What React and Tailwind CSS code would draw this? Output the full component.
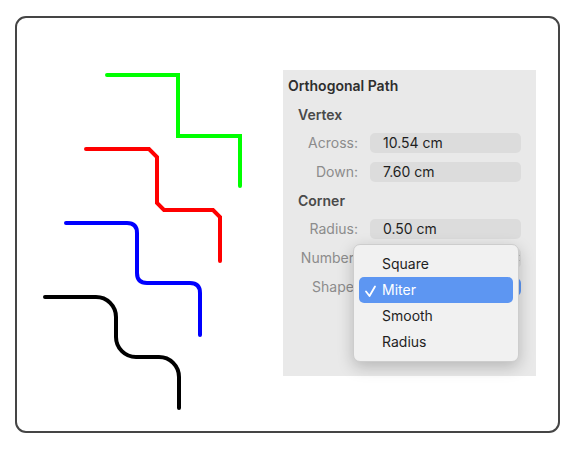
import React from "react";

const font = { fontFamily: "Inter, 'Noto Sans', sans-serif" };

function Field({ label, value, children }) {
  return (
    <div className="flex items-center h-[20px]">
      <div className="w-[75px] text-right text-[14px] leading-[16px] text-[#8c8c8c]">{label}</div>
      <div className="ml-[12px] w-[151px] h-[20px] rounded-[5px] bg-[#dcdcdc] pl-[13px] flex items-center text-[14px] leading-[16px] text-[#1f1f1f] relative">
        {value}
        {children}
      </div>
    </div>
  );
}

export default function App() {
  return (
    <div className="w-[580px] h-[460px] bg-white pt-[16px] pl-[15px]" style={font}>
      <div className="w-[545px] h-[417px] border-2 border-[#454545] rounded-[11px] flex items-start">
        <svg width="266" height="413" viewBox="17 18 266 413" className="shrink-0">
          <path d="M107,75 H178 V136 H240 V186" fill="none" stroke="#00ff00" strokeWidth="4" strokeLinecap="round" strokeLinejoin="miter" />
          <path d="M86,149 H149 L157,157 V203 L164,210 H213 L220,217 V261" fill="none" stroke="#ff0000" strokeWidth="4" strokeLinecap="round" strokeLinejoin="miter" />
          <path d="M66,223 H127 Q137,223 137,233 V273 Q137,283 147,283 H190 Q200,283 200,293 V335" fill="none" stroke="#0000ff" strokeWidth="4" strokeLinecap="round" />
          <path d="M45,297 H96 A20,20 0 0 1 116,317 V337 A20,20 0 0 0 136,357 H159 A20,20 0 0 1 179,377 V408" fill="none" stroke="#000000" strokeWidth="4" strokeLinecap="round" />
        </svg>
        <div className="mt-[52px] w-[253px] h-[306px] bg-[#e9e9e9] relative">
          <div className="pl-[5px] pt-[8px] text-[14px] leading-[16px] font-semibold text-[#2e2e2e]">Orthogonal Path</div>
          <div className="pl-[15px] mt-[13px] text-[14px] leading-[16px] font-semibold text-[#4a4a4a]">Vertex</div>
          <div className="mt-[10px]">
            <Field label="Across:" value="10.54 cm" />
          </div>
          <div className="mt-[9px]">
            <Field label="Down:" value="7.60 cm" />
          </div>
          <div className="pl-[15px] mt-[11px] text-[14px] leading-[16px] font-semibold text-[#4a4a4a]">Corner</div>
          <div className="mt-[10px]">
            <Field label="Radius:" value="0.50 cm" />
          </div>
          <div className="mt-[9px]">
            <Field label="Number:" value="">
              <svg className="absolute right-[1px] top-[2px]" width="6" height="16" viewBox="0 0 6 16">
                <path d="M1,6 L3,3 L5,6 M1,10 L3,13 L5,10" fill="none" stroke="#555" strokeWidth="1.2" />
              </svg>
            </Field>
          </div>
          <div className="mt-[9px] flex items-center h-[20px]">
            <div className="w-[75px] text-right text-[14px] leading-[16px] text-[#8c8c8c]">Shape:</div>
            <div className="ml-[12px] w-[151px] h-[18px] rounded-[5px] bg-white relative">
              <div className="absolute right-0 top-0 w-[16px] h-[18px] rounded-[5px] bg-[#5d96f2]" />
            </div>
          </div>

          <div className="absolute left-[70px] top-[174px] w-[166px] h-[118px] rounded-[7px] bg-[#f1f1f1] border border-[#cdcdcd] shadow-[0_5px_16px_rgba(0,0,0,0.22)] pt-[6px] text-[14px] leading-[16px] text-[#1f1f1f]">
            <div className="h-[26px] flex items-center pl-[28px]">Square</div>
            <div className="h-[26px] mx-[5px] rounded-[5px] bg-[#5d96f2] text-white flex items-center pl-[23px] relative">
              <svg className="absolute left-0 top-0" width="24" height="26" viewBox="0 0 24 26">
                <polyline points="7,14.5 10.5,19 16,9.5" fill="none" stroke="white" strokeWidth="1.8" strokeLinecap="round" strokeLinejoin="round" />
              </svg>
              Miter
            </div>
            <div className="h-[26px] flex items-center pl-[28px]">Smooth</div>
            <div className="h-[26px] flex items-center pl-[28px]">Radius</div>
          </div>
        </div>
      </div>
    </div>
  );
}
